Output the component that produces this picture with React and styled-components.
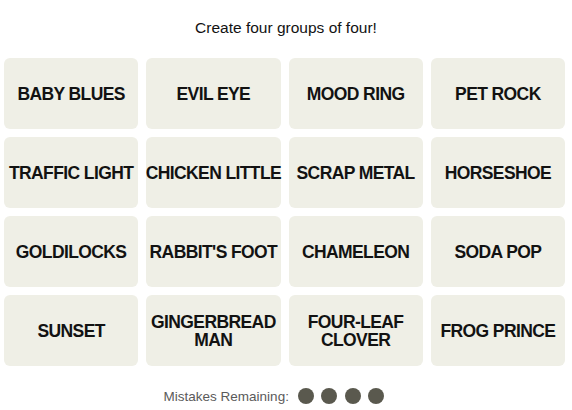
import React from "react";
import styled, { createGlobalStyle } from "styled-components";

const words = [
  "BABY BLUES", "EVIL EYE", "MOOD RING", "PET ROCK",
  "TRAFFIC LIGHT", "CHICKEN LITTLE", "SCRAP METAL", "HORSESHOE",
  "GOLDILOCKS", "RABBIT'S FOOT", "CHAMELEON", "SODA POP",
  "SUNSET", "GINGERBREAD\nMAN", "FOUR-LEAF\nCLOVER", "FROG PRINCE",
];

const App = () => {
  return (
    <>
      <GlobalStyle />
      <Page>
        <Title>Create four groups of four!</Title>
        <Board>
          {words.map((w) => (
            <Tile key={w}>{w}</Tile>
          ))}
        </Board>
        <Mistakes>
          <span>Mistakes Remaining:</span>
          <Dots>
            {[0, 1, 2, 3].map((i) => (
              <Dot key={i} />
            ))}
          </Dots>
        </Mistakes>
      </Page>
    </>
  );
};

export default App;

const GlobalStyle = createGlobalStyle`
  body {
    margin: 0;
    background: #ffffff;
    font-family: "Liberation Sans", Arial, sans-serif;
  }
`;

const Page = styled.div`
  width: 572px;
  height: 410px;
  display: flex;
  flex-direction: column;
  align-items: flex-start;
`;

const Title = styled.div`
  width: 100%;
  text-align: center;
  font-size: 15.5px;
  color: #121212;
  padding-top: 19px;
  height: 40px;
  box-sizing: border-box;
`;

const Board = styled.div`
  margin-top: 18px;
  margin-left: 4px;
  width: 561px;
  display: grid;
  grid-template-columns: repeat(4, minmax(0, 1fr));
  grid-auto-rows: 71px;
  gap: 8px;
`;

const Tile = styled.div`
  background: #efefe6;
  border-radius: 6px;
  display: flex;
  align-items: center;
  justify-content: center;
  text-align: center;
  white-space: pre;
  font-weight: 700;
  font-size: 17.5px;
  line-height: 18px;
  color: #121212;
  padding: 1px 0 0;
  letter-spacing: -0.6px;
`;

const Mistakes = styled.div`
  width: 100%;
  box-sizing: border-box;
  margin-top: 22px;
  padding-right: 24px;
  display: flex;
  justify-content: center;
  align-items: center;
  gap: 9px;
  font-size: 13.5px;
  color: #5a5a5a;
`;

const Dots = styled.div`
  display: flex;
  gap: 7.5px;
`;

const Dot = styled.div`
  width: 16px;
  height: 16px;
  border-radius: 50%;
  background: #5a594e;
`;
